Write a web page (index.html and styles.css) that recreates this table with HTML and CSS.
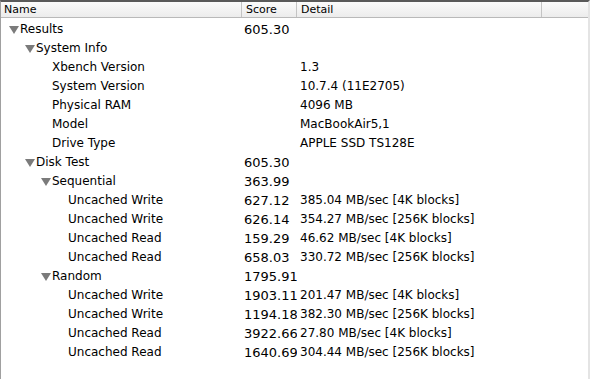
FILE: index.html
```html
<!DOCTYPE html>
<html>
<head>
<meta charset="utf-8">
<link rel="stylesheet" href="styles.css">
</head>
<body>
<div class="outline">
  <div class="header">
    <div class="hcell name-h">Name</div>
    <div class="hcell score-h">Score</div>
    <div class="hcell detail-h">Detail</div>
    <div class="hcell extra-h"></div>
  </div>
  <div class="rows">
    <div class="row"><div class="name l0"><span class="tri"></span>Results</div><div class="score">605.30</div><div class="detail"></div></div>
    <div class="row"><div class="name l1"><span class="tri"></span>System Info</div><div class="score"></div><div class="detail"></div></div>
    <div class="row"><div class="name l2">Xbench Version</div><div class="score"></div><div class="detail">1.3</div></div>
    <div class="row"><div class="name l2">System Version</div><div class="score"></div><div class="detail">10.7.4 (11E2705)</div></div>
    <div class="row"><div class="name l2">Physical RAM</div><div class="score"></div><div class="detail">4096 MB</div></div>
    <div class="row"><div class="name l2">Model</div><div class="score"></div><div class="detail">MacBookAir5,1</div></div>
    <div class="row"><div class="name l2">Drive Type</div><div class="score"></div><div class="detail">APPLE SSD TS128E</div></div>
    <div class="row"><div class="name l1"><span class="tri"></span>Disk Test</div><div class="score">605.30</div><div class="detail"></div></div>
    <div class="row"><div class="name l2t"><span class="tri"></span>Sequential</div><div class="score">363.99</div><div class="detail"></div></div>
    <div class="row"><div class="name l3">Uncached Write</div><div class="score">627.12</div><div class="detail">385.04 MB/sec [4K blocks]</div></div>
    <div class="row"><div class="name l3">Uncached Write</div><div class="score">626.14</div><div class="detail">354.27 MB/sec [256K blocks]</div></div>
    <div class="row"><div class="name l3">Uncached Read</div><div class="score">159.29</div><div class="detail">46.62 MB/sec [4K blocks]</div></div>
    <div class="row"><div class="name l3">Uncached Read</div><div class="score">658.03</div><div class="detail">330.72 MB/sec [256K blocks]</div></div>
    <div class="row"><div class="name l2t"><span class="tri"></span>Random</div><div class="score">1795.91</div><div class="detail"></div></div>
    <div class="row"><div class="name l3">Uncached Write</div><div class="score">1903.11</div><div class="detail">201.47 MB/sec [4K blocks]</div></div>
    <div class="row"><div class="name l3">Uncached Write</div><div class="score">1194.18</div><div class="detail">382.30 MB/sec [256K blocks]</div></div>
    <div class="row"><div class="name l3">Uncached Read</div><div class="score">3922.66</div><div class="detail">27.80 MB/sec [4K blocks]</div></div>
    <div class="row"><div class="name l3">Uncached Read</div><div class="score">1640.69</div><div class="detail">304.44 MB/sec [256K blocks]</div></div>
  </div>
</div>
</body>
</html>
```
FILE: styles.css
```css
html, body {
  margin: 0;
  padding: 0;
  background: #fff;
}
.outline {
  width: 590px;
  height: 379px;
  box-sizing: border-box;
  border-top: 2px solid #5a5a5a;
  border-left: 1px solid #a0a0a0;
  border-right: 2px solid #e4e4e4;
  font-family: "DejaVu Sans", sans-serif;
  color: #000;
  overflow: hidden;
}
.header {
  display: grid;
  grid-template-columns: 241px 55px 245px 1fr;
  height: 15px;
  background: linear-gradient(#fbfbfb, #ececec);
  border-bottom: 1px solid #b9b9b9;
  font-size: 11px;
  line-height: 15px;
}
.hcell {
  padding-left: 4px;
  border-right: 1px solid #c4c4c4;
  white-space: nowrap;
  overflow: hidden;
}
.name-h { padding-left: 3px; }
.extra-h { border-right: none; }
.rows {
  padding-top: 2px;
}
.row {
  display: grid;
  grid-template-columns: 241px 55px 245px 1fr;
  height: 19px;
  line-height: 19px;
  font-size: 12px;
}
.name, .score, .detail {
  white-space: nowrap;
  overflow: hidden;
}
.score { padding-left: 2px; font-size: 13px; }
.detail { padding-left: 3px; }
.name { display: flex; align-items: center; }
.l0 { padding-left: 8px; }
.l1 { padding-left: 24px; }
.l2 { padding-left: 51px; }
.l2t { padding-left: 40px; }
.l3 { padding-left: 67px; }
.tri {
  width: 0;
  height: 0;
  border-left: 5px solid transparent;
  border-right: 5px solid transparent;
  border-top: 8px solid #7b7b7b;
  margin-right: 1px;
}
```
